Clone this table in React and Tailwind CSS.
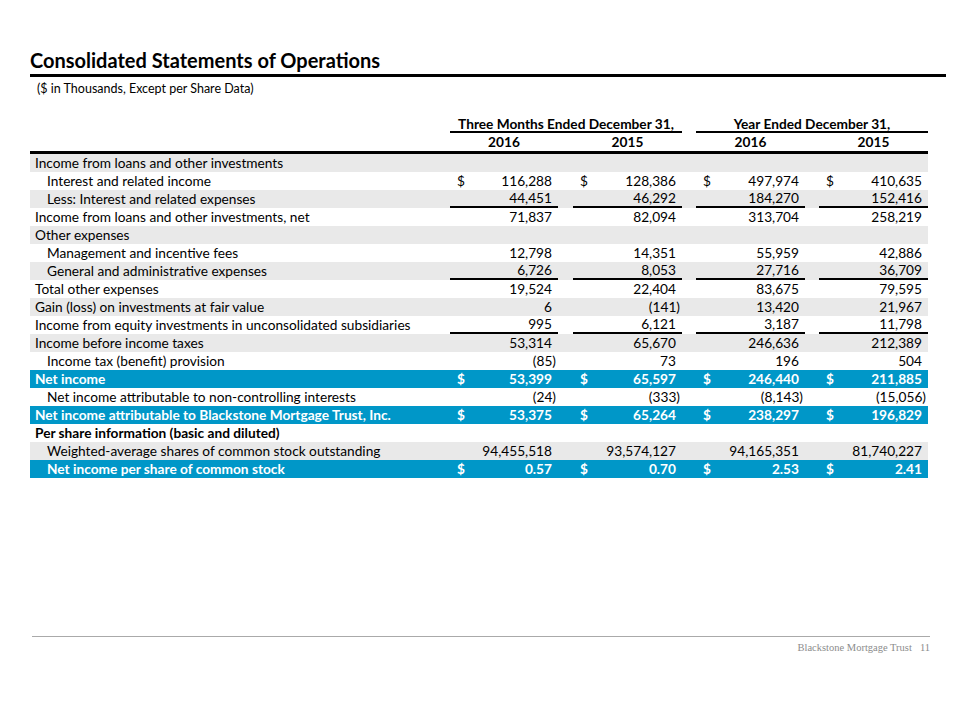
import React from 'react';

const rows = [
  { label: 'Income from loans and other investments', bg: 'gray' },
  { label: 'Interest and related income', indent: true, dollar: true, vals: ['116,288', '128,386', '497,974', '410,635'] },
  { label: 'Less: Interest and related expenses', indent: true, bg: 'gray', under: true, vals: ['44,451', '46,292', '184,270', '152,416'] },
  { label: 'Income from loans and other investments, net', vals: ['71,837', '82,094', '313,704', '258,219'] },
  { label: 'Other expenses', bg: 'gray' },
  { label: 'Management and incentive fees', indent: true, vals: ['12,798', '14,351', '55,959', '42,886'] },
  { label: 'General and administrative expenses', indent: true, bg: 'gray', under: true, vals: ['6,726', '8,053', '27,716', '36,709'] },
  { label: 'Total other expenses', vals: ['19,524', '22,404', '83,675', '79,595'] },
  { label: 'Gain (loss) on investments at fair value', bg: 'gray', vals: ['6', '(141)', '13,420', '21,967'] },
  { label: 'Income from equity investments in unconsolidated subsidiaries', under: true, vals: ['995', '6,121', '3,187', '11,798'] },
  { label: 'Income before income taxes', bg: 'gray', vals: ['53,314', '65,670', '246,636', '212,389'] },
  { label: 'Income tax (benefit) provision', indent: true, vals: ['(85)', '73', '196', '504'] },
  { label: 'Net income', bg: 'blue', dollar: true, vals: ['53,399', '65,597', '246,440', '211,885'] },
  { label: 'Net income attributable to non-controlling interests', indent: true, vals: ['(24)', '(333)', '(8,143)', '(15,056)'] },
  { label: 'Net income attributable to Blackstone Mortgage Trust, Inc.', bg: 'blue', dollar: true, vals: ['53,375', '65,264', '238,297', '196,829'] },
  { label: 'Per share information (basic and diluted)', bold: true },
  { label: 'Weighted-average shares of common stock outstanding', indent: true, bg: 'gray', vals: ['94,455,518', '93,574,127', '94,165,351', '81,740,227'] },
  { label: 'Net income per share of common stock', indent: true, bg: 'blue', dollar: true, vals: ['0.57', '0.70', '2.53', '2.41'] },
];

const colW = ['w-[108px]', 'w-[109px]', 'w-[109px]', 'w-[109px]'];
const gapW = ['w-[15px]', 'w-[14px]', 'w-[14px]'];

const ValueCell = ({ value, dollar, under, width }) => {
  const neg = value && value.startsWith('(');
  return (
    <div className={`${width} h-full flex items-center justify-between pl-[7px] pr-[6px] pb-[1px] ${under ? 'border-b-2 border-black' : ''}`}>
      <span>{dollar ? '$' : ''}</span>
      <span className={neg ? 'mr-[-4px]' : ''}>{value}</span>
    </div>
  );
};

const Row = ({ row }) => {
  const blue = row.bg === 'blue';
  const bg = blue ? 'bg-[#0097c8] text-white font-bold' : row.bg === 'gray' ? 'bg-[#e9e9e9]' : 'bg-white';
  const cells = [];
  for (let i = 0; i < 4; i++) {
    cells.push(
      <ValueCell key={`v${i}`} value={row.vals ? row.vals[i] : ''} dollar={row.dollar} under={row.under} width={colW[i]} />
    );
    if (i < 3) cells.push(<div key={`g${i}`} className={gapW[i]} />);
  }
  return (
    <div className={`flex h-[18px] items-center leading-[16px] ${bg} ${row.bold ? 'font-bold' : ''}`}>
      <div className={`w-[420px] ${row.indent ? 'pl-[17px]' : 'pl-[5px]'} pb-[1px] whitespace-nowrap`}>{row.label}</div>
      {cells}
    </div>
  );
};

export default function App() {
  return (
    <div className="w-[960px] h-[720px] bg-white text-black" style={{ fontFamily: 'Lato, "Open Sans", sans-serif' }}>
      <div className="pl-[30px] pt-[46px]">
        <h1 className="text-[20px] leading-[28px] font-bold">Consolidated Statements of Operations</h1>
        <div className="w-[916px] h-[3px] bg-black" />
        <p className="mt-[4px] pl-[7px] text-[12.5px] leading-[16px]">($ in Thousands, Except per Share Data)</p>

        <div className="mt-[19px] w-[898px] text-[13.7px]">
          <div className="flex">
            <div className="w-[420px]" />
            <div className="w-[232px] h-[17px] flex items-center justify-center font-bold border-b-2 border-black leading-none">
              Three Months Ended December 31,
            </div>
            <div className="w-[14px]" />
            <div className="w-[232px] h-[17px] flex items-center justify-center font-bold border-b-2 border-black leading-none">
              Year Ended December 31,
            </div>
          </div>
          <div className="flex h-[21px] items-center font-bold border-b-[3px] border-black leading-none">
            <div className="w-[420px]" />
            <div className="w-[108px] text-center">2016</div>
            <div className="w-[15px]" />
            <div className="w-[109px] text-center">2015</div>
            <div className="w-[14px]" />
            <div className="w-[109px] text-center">2016</div>
            <div className="w-[14px]" />
            <div className="w-[109px] text-center">2015</div>
          </div>
          {rows.map((r, i) => (
            <Row key={i} row={r} />
          ))}
        </div>
      </div>

      <div className="mt-[158px] ml-[32px] w-[898px] border-t-[1.5px] border-[#aaaaaa]" />
      <div className="flex justify-end items-center w-[930px] pt-[3px] text-[10.5px] text-[#8c8c8c]" style={{ fontFamily: '"Liberation Serif", serif' }}>
        <span>Blackstone Mortgage Trust</span>
        <span className="ml-[8px]">11</span>
      </div>
    </div>
  );
}
